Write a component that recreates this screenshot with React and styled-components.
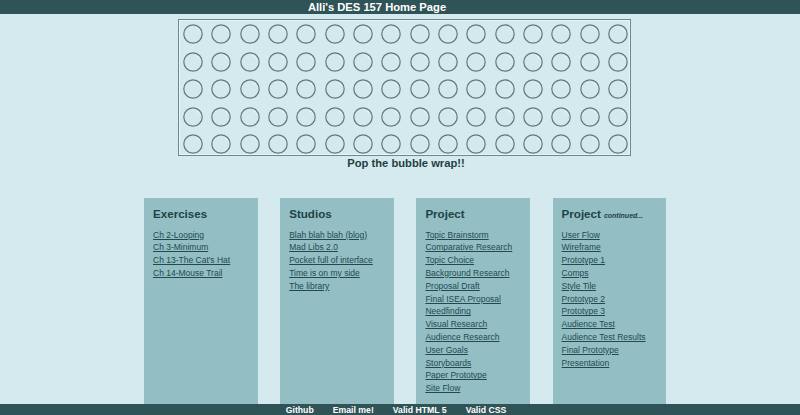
import styled, { createGlobalStyle } from 'styled-components';

const GlobalStyle = createGlobalStyle`
  html, body {
    margin: 0;
    padding: 0;
    background: #d4eaee;
    font-family: "Liberation Sans", Arial, Helvetica, sans-serif;
  }
`;

const Page = styled.div`
  width: 800px;
  display: flex;
  flex-direction: column;
`;

const Header = styled.header`
  height: 14px;
  background: #2f5457;
  color: #ffffff;
  font-size: 11.2px;
  font-weight: bold;
  line-height: 14px;
  text-align: center;
  padding-right: 46px;
`;

const BubbleBox = styled.div`
  box-sizing: border-box;
  margin: 5px 0 0 178px;
  width: 453px;
  height: 137px;
  border: 1px solid #6b8a8d;
  box-shadow: inset 0 0 0 1px rgba(255, 255, 255, 0.45);
  padding: 4px 2px 1px 4px;
  display: grid;
  grid-template-columns: repeat(16, 20px);
  grid-template-rows: repeat(5, 20px);
  column-gap: 8.33px;
  row-gap: 7.5px;
`;

const Caption = styled.div`
  margin-left: 178px;
  width: 456px;
  font-size: 11.2px;
  font-weight: bold;
  line-height: 14px;
  text-align: center;
  color: #1f3f42;
`;

const Columns = styled.div`
  display: flex;
  gap: 22.7px;
  margin-top: 28px;
  padding-left: 144px;
`;

const Panel = styled.section`
  box-sizing: border-box;
  width: 113.5px;
  height: 206px;
  background: #93bec4;
  padding: 9px 0 0 9px;
`;

const PanelTitle = styled.h2`
  margin: 0 0 7.6px;
  height: 14px;
  font-size: 11.6px;
  line-height: 14px;
  font-weight: bold;
  color: #1e4346;
  white-space: nowrap;
`;

const Note = styled.em`
  font-size: 7px;
  line-height: 1;
  margin-left: 3px;
`;

const LinkList = styled.ul`
  list-style: none;
  margin: 0;
  padding: 0;
`;

const Item = styled.li`
  font-size: 8.5px;
  line-height: 12.8px;
  white-space: nowrap;

  a {
    color: #224a4e;
    text-decoration: underline;
  }
`;

const Footer = styled.footer`
  background: #2f5457;
  display: flex;
  justify-content: center;
  gap: 19px;
  padding-right: 8px;
  height: 14px;
`;

const FooterLink = styled.a`
  color: #ffffff;
  font-size: 8.7px;
  font-weight: bold;
  line-height: 12px;
  text-decoration: none;
`;

const Bubble = () => (
  <svg width="20" height="20" viewBox="0 0 20 20">
    <circle cx="10" cy="10" r="9.2" fill="#d3e9ed" stroke="#5b7b7e" strokeWidth="1.2" />
    <path d="M11.9 3.3 A7 7 0 0 1 16.7 8.1 A5.2 5.2 0 0 0 11.9 3.3 Z" fill="#ffffff" />
  </svg>
);

const sections = [
  { title: 'Exercises', links: ['Ch 2-Looping', 'Ch 3-Minimum', "Ch 13-The Cat's Hat", 'Ch 14-Mouse Trail'] },
  { title: 'Studios', links: ['Blah blah blah (blog)', 'Mad Libs 2.0', 'Pocket full of interface', 'Time is on my side', 'The library'] },
  {
    title: 'Project',
    links: ['Topic Brainstorm', 'Comparative Research', 'Topic Choice', 'Background Research', 'Proposal Draft',
      'Final ISEA Proposal', 'Needfinding', 'Visual Research', 'Audience Research', 'User Goals', 'Storyboards',
      'Paper Prototype', 'Site Flow'],
  },
  {
    title: 'Project',
    note: 'continued...',
    links: ['User Flow', 'Wireframe', 'Prototype 1', 'Comps', 'Style Tile', 'Prototype 2', 'Prototype 3',
      'Audience Test', 'Audience Test Results', 'Final Prototype', 'Presentation'],
  },
];

export default function App() {
  return (
    <Page>
      <GlobalStyle />
      <Header>Alli's DES 157 Home Page</Header>
      <BubbleBox>
        {Array.from({ length: 80 }).map((_, i) => <Bubble key={i} />)}
      </BubbleBox>
      <Caption>Pop the bubble wrap!!</Caption>
      <Columns>
        {sections.map((s, i) => (
          <Panel key={i}>
            <PanelTitle>
              {s.title}
              {s.note && <Note>{s.note}</Note>}
            </PanelTitle>
            <LinkList>
              {s.links.map(l => (
                <Item key={l}><a href="#">{l}</a></Item>
              ))}
            </LinkList>
          </Panel>
        ))}
      </Columns>
      <Footer>
        <FooterLink href="#">Github</FooterLink>
        <FooterLink href="#">Email me!</FooterLink>
        <FooterLink href="#">Valid HTML 5</FooterLink>
        <FooterLink href="#">Valid CSS</FooterLink>
      </Footer>
    </Page>
  );
}
